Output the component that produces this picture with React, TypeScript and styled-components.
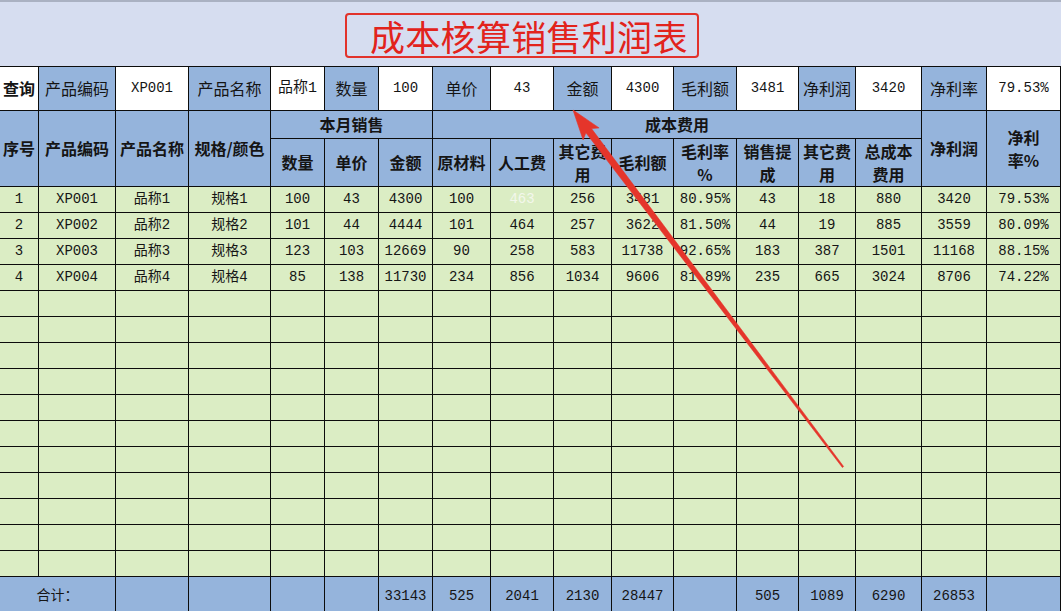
import React from "react";
import styled, { createGlobalStyle } from "styled-components";

const GlobalStyle = createGlobalStyle`
  html, body {
    margin: 0;
    padding: 0;
    overflow: hidden;
    background: #ffffff;
  }
  body {
    font-family: "Noto Sans CJK SC", "Noto Sans", sans-serif;
  }
`;

const Page = styled.div`
  position: relative;
  width: 1061px;
  height: 611px;
  overflow: hidden;
  background: #ffffff;
`;

const TitleBar = styled.div`
  height: 66px;
  box-sizing: border-box;
  background: #d6ddf0;
  border-top: 2px solid #aab1c2;
  display: flex;
  align-items: flex-start;
  padding: 11px 0 0 345px;
`;

const TitleBox = styled.div`
  width: 354px;
  height: 45px;
  box-sizing: border-box;
  border: 2px solid #e2322b;
  border-radius: 4px;
  padding: 0 0 0 23px;
  display: flex;
  align-items: center;
  color: #e2231c;
  font-family: "Noto Sans CJK SC", sans-serif;
  font-weight: 400;
  font-size: 35px;
  letter-spacing: 0.3px;
  line-height: 1;
  white-space: nowrap;
`;

const COLS = [38, 76, 72, 81, 53, 53, 53, 57, 62, 57, 61, 62, 61, 56, 65, 64, 73];

const Grid = styled.div`
  display: grid;
  grid-template-columns: ${COLS.map((w) => `${w}px`).join(" ")};
  grid-template-rows: 43px 27px 47px repeat(15, 25px) 40px;
  gap: 1px;
  background: #0c0c0c;
  padding: 1px 1px 0 0;
  width: 1061px;
  box-sizing: border-box;
`;

type Tone = "blue" | "green" | "white";

const toneBg: Record<Tone, string> = {
  blue: "#95b4dc",
  green: "#dbedc4",
  white: "#ffffff",
};

const Cell = styled.div<{
  $tone: Tone;
  $bold?: boolean;
  $mono?: boolean;
  $span?: number;
  $rows?: number;
  $size?: number;
  $faded?: boolean;
}>`
  background: ${(p) => toneBg[p.$tone]};
  grid-column: span ${(p) => p.$span ?? 1};
  grid-row: span ${(p) => p.$rows ?? 1};
  display: flex;
  align-items: center;
  justify-content: center;
  text-align: center;
  overflow: hidden;
  white-space: nowrap;
  color: ${(p) => (p.$faded ? "#f3f7ec" : "#151515")};
  font-family: ${(p) =>
    p.$mono
      ? `"Liberation Mono", "Noto Sans CJK SC", monospace`
      : `"Noto Sans CJK SC", "Liberation Mono", sans-serif`};
  font-weight: ${(p) => (p.$bold ? 700 : 400)};
  font-size: ${(p) => p.$size ?? 16}px;
  line-height: 1.4;
`;

const Arrow = styled.svg`
  position: absolute;
  left: 0;
  top: 0;
  width: 1061px;
  height: 611px;
  pointer-events: none;
`;

const isCJK = (s: string) => /[\u3000-\u9fff\uff00-\uffef]/.test(s);

const query: Array<[string, Tone, boolean?]> = [
  ["查询", "white", true],
  ["产品编码", "blue"],
  ["XP001", "white"],
  ["产品名称", "blue"],
  ["品称1", "white"],
  ["数量", "blue"],
  ["100", "white"],
  ["单价", "blue"],
  ["43", "white"],
  ["金额", "blue"],
  ["4300", "white"],
  ["毛利额", "blue"],
  ["3481", "white"],
  ["净利润", "blue"],
  ["3420", "white"],
  ["净利率", "blue"],
  ["79.53%", "white"],
];

const subHeads: React.ReactNode[] = [
  "数量",
  "单价",
  "金额",
  "原材料",
  "人工费",
  <>其它费<br />用</>,
  "毛利额",
  <>毛利率<br />%</>,
  <>销售提<br />成</>,
  <>其它费<br />用</>,
  <>总成本<br />费用</>,
];

const rows: string[][] = [
  ["1", "XP001", "品称1", "规格1", "100", "43", "4300", "100", "463", "256", "3481", "80.95%", "43", "18", "880", "3420", "79.53%"],
  ["2", "XP002", "品称2", "规格2", "101", "44", "4444", "101", "464", "257", "3622", "81.50%", "44", "19", "885", "3559", "80.09%"],
  ["3", "XP003", "品称3", "规格3", "123", "103", "12669", "90", "258", "583", "11738", "92.65%", "183", "387", "1501", "11168", "88.15%"],
  ["4", "XP004", "品称4", "规格4", "85", "138", "11730", "234", "856", "1034", "9606", "81.89%", "235", "665", "3024", "8706", "74.22%"],
];

const EMPTY_ROWS = 11;

const footer = ["", "", "", "", "33143", "525", "2041", "2130", "28447", "", "505", "1089", "6290", "26853", ""];

export default function App() {
  return (
    <Page>
      <GlobalStyle />
      <TitleBar>
        <TitleBox>成本核算销售利润表</TitleBox>
      </TitleBar>
      <Grid>
        {query.map(([text, tone, bold], i) => (
          <Cell
            key={`q${i}`}
            $tone={tone}
            $bold={bold}
            $mono={!isCJK(text) || /\d/.test(text)}
            $size={isCJK(text) ? (/\d/.test(text) ? 15 : 16) : 14}
          >
            {text}
          </Cell>
        ))}

        <Cell $tone="blue" $bold $rows={2}>序号</Cell>
        <Cell $tone="blue" $bold $rows={2}>产品编码</Cell>
        <Cell $tone="blue" $bold $rows={2}>产品名称</Cell>
        <Cell $tone="blue" $bold $rows={2}>规格/颜色</Cell>
        <Cell $tone="blue" $bold $span={3}>本月销售</Cell>
        <Cell $tone="blue" $bold $span={8}>成本费用</Cell>
        <Cell $tone="blue" $bold $rows={2}>净利润</Cell>
        <Cell $tone="blue" $bold $rows={2}>净利<br />率%</Cell>
        {subHeads.map((h, i) => (
          <Cell key={`h${i}`} $tone="blue" $bold>
            {h}
          </Cell>
        ))}

        {rows.map((r, ri) =>
          r.map((v, ci) => (
            <Cell
              key={`r${ri}c${ci}`}
              $tone="green"
              $mono
              $size={14}
              $faded={ri === 0 && ci === 8}
            >
              {v}
            </Cell>
          ))
        )}
        {Array.from({ length: EMPTY_ROWS * 17 }).map((_, i) => (
          <Cell key={`e${i}`} $tone="green" />
        ))}

        <Cell $tone="blue" $span={2} $mono $size={14}>合计：</Cell>
        {footer.map((v, i) => (
          <Cell key={`f${i}`} $tone="blue" $mono $size={14}>
            {v}
          </Cell>
        ))}
      </Grid>
      <Arrow viewBox="0 0 1061 611">
        <polygon
          points="573,110 599.1,127.9 591.5,128.6 843.6,466.5 842.4,467.5 585.9,132.8 583.1,139.9"
          fill="#e5352b"
          stroke="#e5352b"
          strokeWidth="0.6"
          strokeLinejoin="round"
        />
      </Arrow>
    </Page>
  );
}
